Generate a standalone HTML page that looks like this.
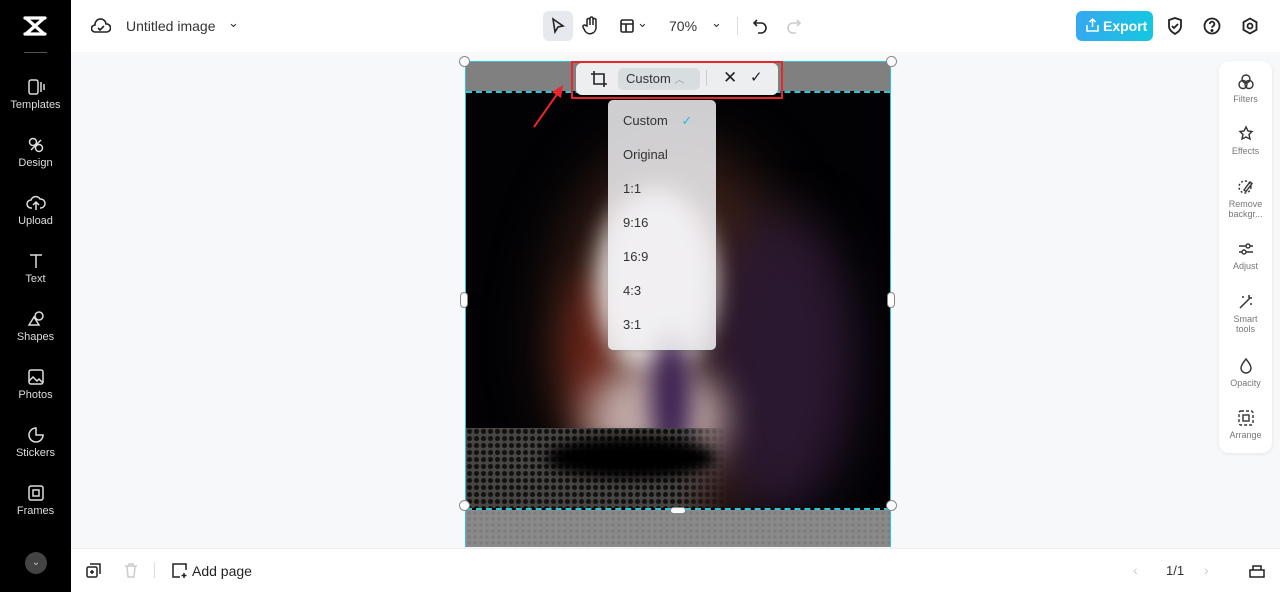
<!DOCTYPE html>
<html><head><meta charset="utf-8"><style>
*{margin:0;padding:0;box-sizing:border-box}
body{width:1280px;height:595px;overflow:hidden;background:#fff;font-family:"Liberation Sans",sans-serif;position:relative}
.side{position:absolute;left:0;top:0;width:71px;height:592px;background:#000;color:#ccc}
.side .it{position:absolute;left:0;width:71px;text-align:center;font-size:11px;color:#ddd}
.side svg{display:block;margin:0 auto 3px}
.top{position:absolute;left:71px;top:0;right:0;height:52px;background:#fff}
.canvas{position:absolute;left:71px;top:52px;right:0;height:496px;background:#f7f8fa}
.bottom{position:absolute;left:71px;top:548px;right:0;height:44px;background:#fff;border-top:1px solid #eee}
.rp{position:absolute;left:1219px;top:61px;width:53px;height:392px;background:#fff;border-radius:10px;box-shadow:0 1px 4px rgba(0,0,0,.08)}
.rp .it{position:absolute;width:53px;text-align:center;font-size:9px;color:#777;line-height:10px}
.rp svg{display:block;margin:0 auto 3px}
.h{position:absolute;width:9px;height:9px;border:1px solid #888;border-radius:50%;background:#fff}
.dd div{height:34px;line-height:34px;padding-left:15px;font-size:13px;color:#333}
.b{position:absolute;border-radius:50%}
</style></head><body>
<div class="side">
 <svg style="position:absolute;left:22px;top:14px" width="26" height="24" viewBox="0 0 26 24" fill="none" stroke="#fff" stroke-width="3.2" stroke-linecap="round"><path d="M3 4h20M3 20h20M5 5l16 14M21 5L5 19"/></svg>
 <div style="position:absolute;left:24px;top:52px;width:23px;height:1px;background:#555"></div>
 <div class="it" style="top:78px"><svg width="20" height="18" viewBox="0 0 20 18" fill="none" stroke="#ddd" stroke-width="1.5"><rect x="3" y="2" width="9" height="14" rx="2"/><path d="M15 4v10M18 6v6"/></svg>Templates</div>
 <div class="it" style="top:136px"><svg width="20" height="18" viewBox="0 0 20 18" fill="none" stroke="#ddd" stroke-width="1.5"><circle cx="7" cy="6" r="3.5"/><circle cx="13" cy="12" r="3.5"/><path d="M5 14l10-10"/></svg>Design</div>
 <div class="it" style="top:194px"><svg width="20" height="18" viewBox="0 0 20 18" fill="none" stroke="#ddd" stroke-width="1.5"><path d="M6 14H5a4 4 0 010-8 5 5 0 019-1 4 4 0 011 9h-1M10 9v7M7 11l3-3 3 3"/></svg>Upload</div>
 <div class="it" style="top:252px"><svg width="20" height="18" viewBox="0 0 20 18" fill="none" stroke="#ddd" stroke-width="1.5"><path d="M4 3h12M10 3v13"/></svg>Text</div>
 <div class="it" style="top:310px"><svg width="20" height="18" viewBox="0 0 20 18" fill="none" stroke="#ddd" stroke-width="1.5"><path d="M3 15l5-8 5 8z"/><circle cx="13" cy="6" r="4"/></svg>Shapes</div>
 <div class="it" style="top:368px"><svg width="20" height="18" viewBox="0 0 20 18" fill="none" stroke="#ddd" stroke-width="1.5"><rect x="3" y="2" width="14" height="14" rx="2"/><path d="M3 13l4-4 4 4 2-2 4 4"/></svg>Photos</div>
 <div class="it" style="top:426px"><svg width="20" height="18" viewBox="0 0 20 18" fill="none" stroke="#ddd" stroke-width="1.5"><path d="M10 2a7 7 0 107 7h-7z"/></svg>Stickers</div>
 <div class="it" style="top:484px"><svg width="20" height="18" viewBox="0 0 20 18" fill="none" stroke="#ddd" stroke-width="1.5"><rect x="3" y="2" width="14" height="14" rx="2"/><rect x="7" y="6" width="6" height="6"/></svg>Frames</div>
 <div style="position:absolute;left:25px;top:552px;width:22px;height:22px;border-radius:50%;background:#444;color:#ccc;font-size:10px;text-align:center;line-height:22px">⌄</div>
</div>
<div style="position:absolute;left:71px;top:274px;width:6px;height:48px;background:#333;border-radius:0 6px 6px 0"></div>
<div class="top">
 <svg style="position:absolute;left:20px;top:17px" width="20" height="18" viewBox="0 0 20 18" fill="none" stroke="#222" stroke-width="1.6"><path d="M5 15H4a3.5 3.5 0 010-7 5.5 5.5 0 0111-1 4 4 0 011 8z"/><path d="M7 11l2 2 4-4"/></svg>
 <div style="position:absolute;left:55px;top:18px;font-size:14px;color:#333">Untitled image</div>
 <div style="position:absolute;left:157px;top:15px;font-size:13px;color:#333">⌄</div>
 <div style="position:absolute;left:472px;top:11px;width:30px;height:30px;border-radius:6px;background:#e6e9ee"></div>
 <svg style="position:absolute;left:479px;top:17px" width="16" height="18" viewBox="0 0 16 18" fill="none" stroke="#222" stroke-width="1.6"><path d="M3 2l10 7-5 1-3 5z"/></svg>
 <svg style="position:absolute;left:511px;top:16px" width="18" height="20" viewBox="0 0 18 20" fill="none" stroke="#222" stroke-width="1.5"><path d="M5 10V4a1.5 1.5 0 013 0v5V2.5a1.5 1.5 0 013 0V9V4a1.5 1.5 0 013 0v8a6 6 0 01-11 3l-2-4a1.5 1.5 0 012.5-1.5z"/></svg>
 <svg style="position:absolute;left:548px;top:18px" width="16" height="16" viewBox="0 0 16 16" fill="none" stroke="#222" stroke-width="1.6"><rect x="2" y="2" width="12" height="12" rx="1.5"/><path d="M2 6h12M7 6v8"/></svg>
 <div style="position:absolute;left:566px;top:15px;font-size:13px;color:#333">⌄</div>
 <div style="position:absolute;left:598px;top:18px;font-size:14px;color:#333">70%</div>
 <div style="position:absolute;left:640px;top:15px;font-size:13px;color:#333">⌄</div>
 <div style="position:absolute;left:666px;top:17px;width:1px;height:18px;background:#ddd"></div>
 <svg style="position:absolute;left:681px;top:18px" width="16" height="16" viewBox="0 0 16 16" fill="none" stroke="#222" stroke-width="1.6"><path d="M5 2L2 5l3 3M2 5h7a5 5 0 010 10H6"/></svg>
 <svg style="position:absolute;left:715px;top:18px" width="16" height="16" viewBox="0 0 16 16" fill="none" stroke="#ccc" stroke-width="1.6"><path d="M11 2l3 3-3 3M14 5H7a5 5 0 000 10h3"/></svg>
 <div style="position:absolute;left:1005px;top:11px;width:77px;height:30px;border-radius:6px;background:linear-gradient(90deg,#36a8f0,#14c8e0);color:#fff;font-size:14px;font-weight:bold;line-height:30px;padding-left:27px">Export</div>
 <svg style="position:absolute;left:1015px;top:18px" width="13" height="14" viewBox="0 0 13 14" fill="none" stroke="#fff" stroke-width="1.5"><path d="M6.5 9V1M3.5 4l3-3 3 3M1 7v6h11V7"/></svg>
 <svg style="position:absolute;left:1095px;top:16px" width="18" height="20" viewBox="0 0 18 20" fill="none" stroke="#222" stroke-width="1.8"><path d="M9 2l6 2v6c0 4-3 6-6 8-3-2-6-4-6-8V4z"/><path d="M6 10l2 2 4-4"/></svg>
 <svg style="position:absolute;left:1132px;top:17px" width="18" height="18" viewBox="0 0 18 18" fill="none" stroke="#222" stroke-width="1.8"><circle cx="9" cy="9" r="7.5"/><path d="M6.8 7a2.3 2.3 0 114 1.5c-1 .8-1.8 1.1-1.8 2.3"/><circle cx="9" cy="13.5" r=".6" fill="#222"/></svg>
 <svg style="position:absolute;left:1170px;top:17px" width="18" height="18" viewBox="0 0 18 18" fill="none" stroke="#222" stroke-width="1.8"><path d="M9 1.5l6.5 3.7v7.6L9 16.5l-6.5-3.7V5.2z"/><circle cx="9" cy="9" r="2.5"/></svg>
</div>
<div class="canvas"></div>
<!-- image -->
<div style="position:absolute;left:465px;top:61px;width:426px;height:486px;background:#808080;border:1px solid #2cc5d8"></div>
<div style="position:absolute;left:466px;top:510px;width:424px;height:37px;background:#8a8a8a;overflow:hidden"><div style="position:absolute;inset:0;background:radial-gradient(circle,#777 1.5px,transparent 2px) 0 0/6px 6px;opacity:.7"></div></div>
<div style="position:absolute;left:466px;top:91px;width:424px;height:419px;background:#020204;overflow:hidden;border-top:2px dashed #2cc5d8;border-bottom:2px dashed #2cc5d8">
 <div class="b" style="left:85px;top:50px;width:250px;height:390px;background:#3a2018;filter:blur(30px)"></div>
 <div class="b" style="left:240px;top:120px;width:150px;height:300px;background:#2a1830;filter:blur(25px)"></div>
 <div class="b" style="left:100px;top:180px;width:60px;height:160px;background:#6a2418;filter:blur(18px)"></div>
 <div class="b" style="left:130px;top:95px;width:120px;height:190px;background:#e6dedc;filter:blur(12px)"></div>
 <div class="b" style="left:120px;top:270px;width:140px;height:110px;background:#c0a8a6;filter:blur(18px)"></div>
 <div class="b" style="left:185px;top:240px;width:40px;height:130px;background:#3a2050;filter:blur(12px)"></div>
 <div style="position:absolute;left:0;top:335px;width:424px;height:85px;background:radial-gradient(circle,#111 2px,transparent 3px) 0 0/7px 7px,#4a4644;-webkit-mask-image:linear-gradient(90deg,#000 0,#000 50%,transparent 62%)"></div>
 <div class="b" style="left:80px;top:345px;width:170px;height:40px;background:#000;filter:blur(6px)"></div>
</div>
<!-- handles -->
<div class="h" style="left:459px;top:56px;width:11px;height:11px"></div>
<div class="h" style="left:886px;top:56px;width:11px;height:11px"></div>
<div class="h" style="left:459px;top:500px;width:11px;height:11px"></div>
<div class="h" style="left:886px;top:500px;width:11px;height:11px"></div>
<div class="h" style="left:460px;top:292px;width:8px;height:16px;border-radius:4px"></div>
<div class="h" style="left:887px;top:292px;width:8px;height:16px;border-radius:4px"></div>
<div class="h" style="left:670px;top:507px;width:16px;height:7px;border-radius:4px"></div>
<!-- crop toolbar -->
<div style="position:absolute;left:571px;top:61px;width:212px;height:38px;border:2px solid #e8262b"></div>
<div style="position:absolute;left:576px;top:63px;width:202px;height:32px;background:#eceeef;border-radius:6px"></div>
<svg style="position:absolute;left:590px;top:70px" width="18" height="18" viewBox="0 0 18 18" fill="none" stroke="#222" stroke-width="1.6"><path d="M4 1v13h13M1 4h13v13"/></svg>
<div style="position:absolute;left:618px;top:68px;width:82px;height:22px;background:#d8dde0;border-radius:5px;font-size:13px;color:#333;line-height:22px;padding-left:8px">Custom <span style="color:#999;font-size:10px">︿</span></div>
<div style="position:absolute;left:706px;top:70px;width:1px;height:16px;background:#ccc"></div>
<div style="position:absolute;left:723px;top:68px;font-size:17px;color:#222">✕</div>
<div style="position:absolute;left:750px;top:68px;font-size:15px;color:#222">✓</div>
<svg style="position:absolute;left:530px;top:82px" width="36" height="48" viewBox="0 0 36 48"><path d="M4 45L30 8" stroke="#e8262b" stroke-width="2"/><path d="M33 3l-2 13-9-6z" fill="#e8262b"/></svg>
<!-- dropdown -->
<div class="dd" style="position:absolute;left:608px;top:100px;width:108px;height:250px;background:rgba(242,242,244,.85);border-radius:5px;padding-top:4px;box-shadow:0 1px 4px rgba(0,0,0,.15)">
<div>Custom <span style="color:#1fc2d8;margin-left:10px">✓</span></div><div>Original</div><div>1:1</div><div>9:16</div><div>16:9</div><div>4:3</div><div>3:1</div></div>
<!-- right panel -->
<div class="rp">
 <div class="it" style="top:12px"><svg width="18" height="18" viewBox="0 0 18 18" fill="none" stroke="#333" stroke-width="1.4"><circle cx="9" cy="6" r="4"/><circle cx="6" cy="11.5" r="4"/><circle cx="12" cy="11.5" r="4"/></svg>Filters</div>
 <div class="it" style="top:64px"><svg width="18" height="18" viewBox="0 0 18 18" fill="none" stroke="#333" stroke-width="1.4"><path d="M9 2l2 4 4 .5-3 3 1 4.5-4-2-4 2 1-4.5-3-3 4-.5z"/></svg>Effects</div>
 <div class="it" style="top:117px"><svg width="18" height="18" viewBox="0 0 18 18" fill="none" stroke="#333" stroke-width="1.4"><circle cx="8" cy="9" r="6" stroke-dasharray="2 2"/><path d="M7 12l6-8 2 1.5-6 8z"/></svg>Remove<br>backgr...</div>
 <div class="it" style="top:179px"><svg width="18" height="18" viewBox="0 0 18 18" fill="none" stroke="#333" stroke-width="1.4"><path d="M2 6h14M2 12h14"/><circle cx="11" cy="6" r="2" fill="#fff"/><circle cx="7" cy="12" r="2" fill="#fff"/></svg>Adjust</div>
 <div class="it" style="top:232px"><svg width="18" height="18" viewBox="0 0 18 18" fill="none" stroke="#333" stroke-width="1.5"><path d="M3 15L13 5M12 2v3M15 5h-3M6 3v2M14 10v2"/></svg>Smart<br>tools</div>
 <div class="it" style="top:296px"><svg width="18" height="18" viewBox="0 0 18 18" fill="none" stroke="#333" stroke-width="1.4"><path d="M9 2s-5 6-5 9a5 5 0 0010 0c0-3-5-9-5-9z"/></svg>Opacity</div>
 <div class="it" style="top:348px"><svg width="18" height="18" viewBox="0 0 18 18" fill="none" stroke="#333" stroke-width="1.4"><rect x="2" y="2" width="14" height="14" rx="2" stroke-dasharray="3 2"/><rect x="6" y="6" width="6" height="6"/></svg>Arrange</div>
</div>
<div class="bottom">
 <svg style="position:absolute;left:14px;top:13px" width="17" height="17" viewBox="0 0 17 17" fill="none" stroke="#222" stroke-width="1.5"><rect x="2" y="5" width="10" height="10" rx="1.5"/><path d="M5 2h10v10M5 10h4M7 8v4"/></svg>
 <svg style="position:absolute;left:52px;top:13px" width="16" height="17" viewBox="0 0 16 17" fill="none" stroke="#ccc" stroke-width="1.5"><path d="M2 4h12M6 4V2h4v2M4 4l1 11h6l1-11"/></svg>
 <div style="position:absolute;left:83px;top:13px;width:1px;height:16px;background:#ddd"></div>
 <svg style="position:absolute;left:100px;top:13px" width="17" height="17" viewBox="0 0 17 17" fill="none" stroke="#222" stroke-width="1.5"><path d="M15 8V2H2v13h7M13 11v5M10.5 13.5h5"/></svg>
 <div style="position:absolute;left:121px;top:14px;font-size:14px;color:#222">Add page</div>
 <div style="position:absolute;left:1062px;top:13px;font-size:14px;color:#ccc">‹</div>
 <div style="position:absolute;left:1095px;top:14px;font-size:13px;color:#333">1/1</div>
 <div style="position:absolute;left:1133px;top:13px;font-size:14px;color:#ccc">›</div>
 <svg style="position:absolute;left:1177px;top:13px" width="18" height="17" viewBox="0 0 18 17" fill="none" stroke="#222" stroke-width="1.5"><path d="M2 15h14V8H2zM5 8V4h8v4"/></svg>
</div>
</body></html>
